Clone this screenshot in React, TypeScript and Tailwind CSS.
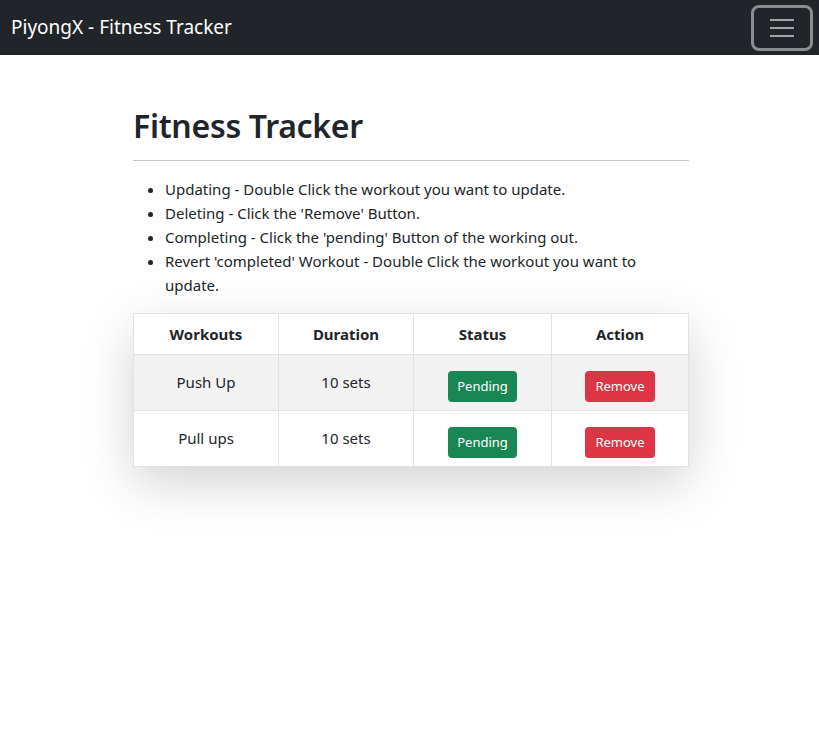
import React from "react";

const rows = [
  { name: "Push Up", duration: "10 sets" },
  { name: "Pull ups", duration: "10 sets" },
];

export default function App() {
  return (
    <div className="min-h-[731px] bg-white text-[#212529]" style={{ fontFamily: '"Noto Sans", "Open Sans", sans-serif' }}>
      <nav className="h-[55px] bg-[#212529] flex items-center justify-between pl-[11px] pr-[6px]">
        <span className="text-white text-[19px]">PiyongX - Fitness Tracker</span>
        <button className="w-[62px] h-[46px] rounded-[8px] border-[3px] border-[#8a8d90] flex flex-col items-center justify-center gap-[6px]">
          <span className="block w-[24px] h-[2px] bg-[#a3a5a8]" />
          <span className="block w-[24px] h-[2px] bg-[#a3a5a8]" />
          <span className="block w-[24px] h-[2px] bg-[#a3a5a8]" />
        </button>
      </nav>
      <main className="w-[556px] ml-[133px] pt-[50px]">
        <h1 className="text-[32px] leading-[42px] font-semibold tracking-[-0.3px]">Fitness Tracker</h1>
        <hr className="mt-[13px] border-t border-[#c8c8c8]" />
        <ul className="mt-[16px] list-disc pl-[32px] pr-[30px] text-[15px] leading-[24px]">
          <li>Updating - Double Click the workout you want to update.</li>
          <li>Deleting - Click the 'Remove' Button.</li>
          <li>Completing - Click the 'pending' Button of the working out.</li>
          <li>Revert 'completed' Workout - Double Click the workout you want to update.</li>
        </ul>
        <table className="mt-[16px] w-full border-collapse shadow-[0_16px_48px_rgba(0,0,0,0.175)] text-[15px]">
          <thead>
            <tr className="h-[41px]">
              <th className="w-[145px] border border-[#dee2e6] font-bold">Workouts</th>
              <th className="w-[135px] border border-[#dee2e6] font-bold">Duration</th>
              <th className="w-[138px] border border-[#dee2e6] font-bold">Status</th>
              <th className="border border-[#dee2e6] font-bold">Action</th>
            </tr>
          </thead>
          <tbody>
            {rows.map((r, i) => (
              <tr key={r.name} className={`h-[56px] ${i === 0 ? "bg-[#f2f2f2]" : "bg-white"}`}>
                <td className="border border-[#dee2e6] text-center">{r.name}</td>
                <td className="border border-[#dee2e6] text-center">{r.duration}</td>
                <td className="border border-[#dee2e6] text-center">
                  <button className="mt-[8px] bg-[#198754] text-white text-[13px] h-[31px] px-[9px] rounded-[4px]">Pending</button>
                </td>
                <td className="border border-[#dee2e6] text-center">
                  <button className="mt-[8px] bg-[#dc3545] text-white text-[13px] h-[31px] px-[10px] rounded-[4px]">Remove</button>
                </td>
              </tr>
            ))}
          </tbody>
        </table>
      </main>
    </div>
  );
}
